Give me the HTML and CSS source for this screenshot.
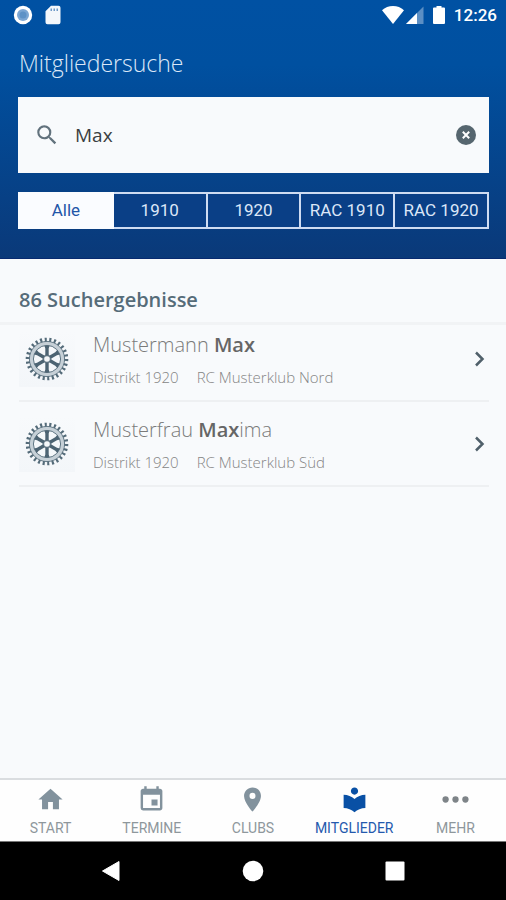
FILE: index.html
```
<!DOCTYPE html>
<html lang="de">
<head>
<meta charset="utf-8">
<meta name="viewport" content="width=device-width, initial-scale=1">
<title>Mitgliedersuche</title>
<link rel="stylesheet" href="styles.css">
</head>
<body>
<svg class="defs" aria-hidden="true">
  <symbol id="wheel" viewBox="0 0 56 56">
    <g fill="none" stroke="#546b79">
      <circle cx="28" cy="28" r="19.3" stroke-width="4" pathLength="52" stroke-dasharray="0.9 1.1"/>
      <circle cx="28" cy="28" r="15.4" stroke="#c6d0d7" stroke-width="4"/>
      <circle cx="28" cy="28" r="17.6" stroke-width="0.900"/>
      <circle cx="28" cy="28" r="13.6" stroke-width="0.900"/>
      <circle cx="28" cy="28" r="3.600" stroke="#6c7f8c" stroke-width="1.600"/>
    </g>
    <g fill="#4d6473">
      <path id="spoke" d="M26.300 24.500V17.500L25.400 14.600h5.200L29.700 17.500v7z"/>
      <use href="#spoke" transform="rotate(60 28 28)"/>
      <use href="#spoke" transform="rotate(120 28 28)"/>
      <use href="#spoke" transform="rotate(180 28 28)"/>
      <use href="#spoke" transform="rotate(240 28 28)"/>
      <use href="#spoke" transform="rotate(300 28 28)"/>
    </g>
  </symbol>
  <symbol id="chevron" viewBox="0 0 12 18"><path d="m2 2.500 6.500 6.500L2 15.500" fill="none" stroke="#50606a" stroke-width="2.500"/></symbol>
</svg>

<header class="header">
  <div class="status">
    <div class="status-group status-left">
      <svg width="20" height="20" viewBox="0 0 20 20" aria-hidden="true"><circle cx="10" cy="10" r="9.200" fill="#fff"/><circle cx="10" cy="10" r="6" fill="#7ba6d3"/><circle cx="10" cy="10" r="3.500" fill="#5e92c6"/></svg>
      <svg width="16" height="20" viewBox="0 0 16 20" aria-hidden="true"><path d="M6 .8h7.500a2 2 0 0 1 2 2v14.400a2 2 0 0 1-2 2h-11a2 2 0 0 1-2-2V6.300z" fill="#f4f7fb"/><path d="M5.500 3.500h1.500v2.500H5.500zM8.500 3.500H10v2.500H8.500zM11.500 3.500H13v2.500h-1.500z" fill="#6f9ac8"/></svg>
    </div>
    <div class="status-group">
      <svg width="22" height="20" viewBox="0 0 22 20" aria-hidden="true"><path d="M11 19 0 5.200C3 2.500 6.800 1 11 1s8 1.500 11 4.200z" fill="#fff"/></svg>
      <svg class="signal" width="18" height="20" viewBox="0 0 18 20" aria-hidden="true"><path d="M0 19 17.500 1.500V19z" fill="#5c8fc4"/><path d="M0 19 11 8v11z" fill="#fff"/></svg>
      <svg class="battery" width="12" height="20" viewBox="0 0 12 20" aria-hidden="true"><path d="M3.500 1h5v1.500H11q1 0 1 1V18q0 1-1 1H1q-1 0-1-1V3.500q0-1 1-1h2.500z" fill="#fff"/></svg>
      <span class="clock">12:26</span>
    </div>
  </div>
  <h1 class="title">Mitgliedersuche</h1>
  <form class="search" role="search">
    <label for="query" aria-label="Suche"><svg width="26" height="26" viewBox="0 0 24 24" aria-hidden="true"><path fill="#62727d" d="M15.500 14h-.79l-.28-.27A6.471 6.471 0 0 0 16 9.500 6.500 6.500 0 1 0 9.500 16c1.610 0 3.090-.59 4.230-1.570l.27.28v.79l5 4.990L20.490 19l-4.990-5zm-6 0C7.010 14 5 11.990 5 9.500S7.010 5 9.500 5 14 7.010 14 9.500 11.990 14 9.500 14z"/></svg></label>
    <input id="query" type="text" value="Max">
    <button class="clear" type="reset" aria-label="Löschen"><svg width="20" height="20" viewBox="0 0 20 20" aria-hidden="true"><circle cx="10" cy="10" r="10" fill="#56666f"/><path d="m6.800 6.800 6.400 6.400m0-6.400-6.400 6.400" stroke="#fff" stroke-width="2"/></svg></button>
  </form>
  <div class="segments">
    <button class="segment selected" type="button">Alle</button>
    <button class="segment" type="button">1910</button>
    <button class="segment" type="button">1920</button>
    <button class="segment" type="button">RAC 1910</button>
    <button class="segment" type="button">RAC 1920</button>
  </div>
</header>

<main class="results">
  <h2 class="count">86 Suchergebnisse</h2>
  <ul class="list">
    <li><a class="member" href="#mustermann">
      <svg class="avatar" aria-hidden="true"><use href="#wheel"/></svg>
      <span class="info">
        <span class="name">Mustermann <b>Max</b></span>
        <span class="meta"><span>Distrikt 1920</span><span>RC Musterklub Nord</span></span>
      </span>
      <svg class="chevron" aria-hidden="true"><use href="#chevron"/></svg>
    </a></li>
    <li><a class="member" href="#musterfrau">
      <svg class="avatar" aria-hidden="true"><use href="#wheel"/></svg>
      <span class="info">
        <span class="name">Musterfrau <b>Max</b>ima</span>
        <span class="meta"><span>Distrikt 1920</span><span>RC Musterklub Süd</span></span>
      </span>
      <svg class="chevron" aria-hidden="true"><use href="#chevron"/></svg>
    </a></li>
  </ul>
</main>

<nav class="tabs">
  <a class="tab" href="#start"><svg viewBox="0 0 24 24" aria-hidden="true"><path d="M10 20v-6h4v6h5v-8h3L12 3 2 12h3v8z"/></svg>START</a>
  <a class="tab" href="#termine"><svg viewBox="0 0 24 24" aria-hidden="true"><path d="M17 12h-5v5h5v-5zM16 1v2H8V1H6v2H5c-1.110 0-1.990.9-1.990 2L3 19a2 2 0 0 0 2 2h14c1.100 0 2-.9 2-2V5c0-1.100-.9-2-2-2h-1V1h-2zm3 18H5V8h14v11z"/></svg>TERMINE</a>
  <a class="tab" href="#clubs"><svg viewBox="0 0 24 24" aria-hidden="true"><path d="M12 2C8.130 2 5 5.130 5 9c0 5.250 7 13 7 13s7-7.750 7-13c0-3.870-3.130-7-7-7zm0 9.500a2.500 2.500 0 0 1 0-5 2.500 2.500 0 0 1 0 5z"/></svg>CLUBS</a>
  <a class="tab active" href="#mitglieder"><svg viewBox="0 0 24 24" aria-hidden="true"><path d="M12 11.550C9.640 9.350 6.480 8 3 8v11c3.480 0 6.640 1.350 9 3.550 2.360-2.190 5.520-3.550 9-3.550V8c-3.480 0-6.640 1.350-9 3.550zM12 8c1.660 0 3-1.340 3-3s-1.340-3-3-3-3 1.340-3 3 1.340 3 3 3z"/></svg>MITGLIEDER</a>
  <a class="tab" href="#mehr"><svg viewBox="0 0 24 24" aria-hidden="true"><g fill="#7e8488"><circle cx="3.800" cy="12" r="2.600"/><circle cx="12" cy="12" r="2.600"/><circle cx="20.200" cy="12" r="2.600"/></g></svg>MEHR</a>
</nav>

<div class="system">
  <button type="button" aria-label="Zurück"><svg width="22" height="22" viewBox="0 0 22 22" aria-hidden="true"><path d="M2.500 11 19 1.500v19z" fill="#fff" stroke="#fff" stroke-linejoin="round"/></svg></button>
  <button type="button" aria-label="Startbildschirm"><svg width="22" height="22" viewBox="0 0 22 22" aria-hidden="true"><circle cx="11" cy="11" r="10.300" fill="#fff"/></svg></button>
  <button type="button" aria-label="Übersicht"><svg width="22" height="22" viewBox="0 0 22 22" aria-hidden="true"><rect x="1.500" y="1.500" width="19" height="19" rx="1" fill="#fff"/></svg></button>
</div>
</body>
</html>
```
FILE: styles.css
```
* {
  box-sizing: border-box;
}

body {
  display: flex;
  flex-direction: column;
  min-height: 100vh;
  margin: 0;
  background: #f8fafc;
  font-family: "Open Sans", sans-serif;
}

button {
  margin: 0;
  padding: 0;
  border: 0;
  background: none;
}

svg {
  display: block;
  flex: none;
}

a {
  color: inherit;
  text-decoration: none;
}

.defs {
  position: absolute;
  width: 0;
  height: 0;
}

.header {
  padding: 0 17px 29px 18px;
  border-bottom: 1px solid #072a70;
  background: linear-gradient(#0051a3 0%, #0050a0 25%, #0a3979 100%);
}

.status {
  display: flex;
  justify-content: space-between;
  height: 30px;
  margin: 0 -8px 0 -5px;
}

.status-group {
  display: flex;
  align-items: center;
}

.status-left {
  gap: 12px;
}

.signal {
  margin-left: 2px;
}

.battery {
  margin: 0 9px;
}

.clock {
  color: #fff;
  font: 500 17px/20px Roboto, sans-serif;
}

.title {
  margin: 17px 0;
  padding-left: 1px;
  color: #dbe7f7;
  font-size: 23px;
  font-weight: 300;
  line-height: 33px;
}

.search {
  display: flex;
  align-items: center;
  height: 76px;
  padding: 0 13px 0 16px;
  background: #f8fafc;
}

.search input {
  flex: 1;
  min-width: 0;
  padding: 0 15px;
  border: 0;
  outline: 0;
  background: transparent;
  color: #3b3f42;
  font: 400 19px/28px "Open Sans", sans-serif;
}

.segments {
  display: grid;
  grid-template-columns: repeat(5, 1fr);
  gap: 2px;
  margin-top: 19px;
  padding: 2px;
  background: #cfdcf2;
}

.segment {
  height: 33px;
  background: #0a3f86;
  color: #dce7f8;
  font: 400 17px/33px Roboto, sans-serif;
  white-space: nowrap;
}

.segment.selected {
  background: #fafcff;
  color: #1f56a8;
  outline: 2px solid #fafcff;
}

.results {
  flex: 1;
}

.count {
  margin: 0;
  padding: 27px 19px 8px;
  border-bottom: 3px solid #f1f3f5;
  color: #566c79;
  font-size: 20px;
  font-weight: 600;
  line-height: 28px;
}

.list {
  margin: -8px 0 0;
  padding: 0 17px 0 19px;
  list-style: none;
}

.member {
  display: flex;
  align-items: center;
  height: 85px;
  border-bottom: 2px solid #eef0f2;
}

.avatar {
  width: 56px;
  height: 56px;
  background: linear-gradient(#f8fafc, #f3f6f9);
}

.info {
  flex: 1;
  margin-left: 18px;
  color: #7a7a7a;
}

.name {
  display: block;
  font-size: 20px;
  font-weight: 300;
  line-height: 32px;
}

.name b {
  color: #666;
  font-weight: 600;
}

.meta {
  display: flex;
  gap: 18px;
  margin-top: 4px;
  color: #858585;
  font-size: 15px;
  font-weight: 300;
  line-height: 24px;
}

.chevron {
  width: 12px;
  height: 18px;
  margin-right: 3px;
}

.tabs {
  display: grid;
  grid-template-columns: repeat(5, 1fr);
  border-top: 2px solid #dadde0;
  border-bottom: 1px solid #777;
  background: #fefefe;
}

.tab {
  display: flex;
  flex-direction: column;
  align-items: center;
  gap: 4px;
  padding: 5px 0 3px;
  color: #8e979c;
  font: 400 14px/20px Roboto, sans-serif;
}

.tab svg {
  width: 29px;
  height: 29px;
  fill: #82929d;
}

.tab.active {
  color: #2459ad;
}

.tab.active svg {
  fill: #0950a5;
}

.system {
  display: flex;
  justify-content: center;
  gap: 120px;
  padding: 18px 0;
  background: #000;
}
```
